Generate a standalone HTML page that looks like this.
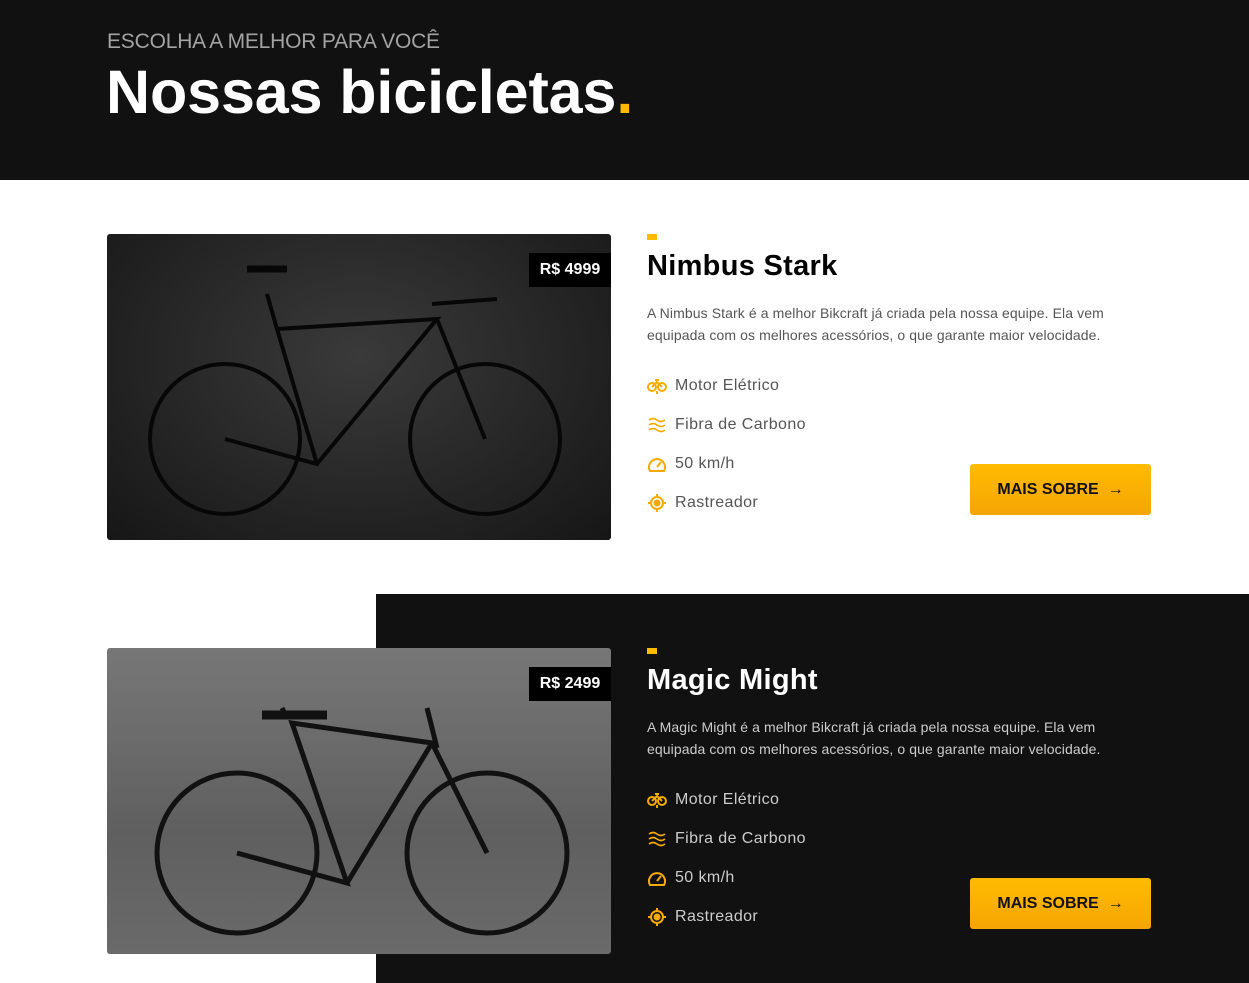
<!DOCTYPE html>
<html><head><meta charset="utf-8"><style>
*{margin:0;padding:0;box-sizing:border-box}
body{width:1249px;height:983px;overflow:hidden;background:#fff;font-family:"Liberation Sans",sans-serif;position:relative}
.hdr{position:absolute;left:0;top:0;width:1249px;height:180px;background:#111}
.sub{position:absolute;left:107px;top:30px;font-size:21px;color:#a3a3a3;letter-spacing:-0.2px}
.ttl{position:absolute;left:106px;top:57px;font-size:61px;font-weight:bold;color:#fff;letter-spacing:-0.1px}
.ttl span{color:#fb0}
.dark{position:absolute;left:376px;top:594px;width:873px;height:389px;background:#111}
.img{position:absolute;left:107px;width:504px;height:306px;border-radius:3px;overflow:hidden}
.badge{position:absolute;left:529px;width:82px;height:34px;background:#000;color:#fff;font-weight:bold;font-size:16px;line-height:34px;text-align:center}
.info{position:absolute;left:647px;width:500px}
.sq{width:10px;height:6px;background:#fb0}
.name{font-size:29px;font-weight:bold;margin-top:10px;letter-spacing:0.3px}
.p{font-size:14px;line-height:22px;color:#555;margin-top:19px;letter-spacing:0.1px}
.feat{font-size:16px;color:#555;height:39px;display:flex;align-items:center;letter-spacing:0.4px}
.feat svg{margin-right:8px}
.btn{position:absolute;left:970px;width:181px;height:51px;border-radius:3px;background:linear-gradient(#ffbb00,#f5a504);color:#111;font-weight:bold;font-size:16px;line-height:51px;text-align:center}
.dk .name{color:#fff}.dk .p,.dk .feat{color:#ccc}
</style></head><body>
<div class="hdr"><div class="sub">ESCOLHA A MELHOR PARA VOCÊ</div><div class="ttl">Nossas bicicletas<span>.</span></div></div>
<div class="dark"></div>

<div class="img" style="top:234px;background:radial-gradient(ellipse at 50% 40%,#3a3a3a,#161616)">
<svg width="504" height="306" fill="none" stroke="#070707" stroke-width="4"><circle cx="118" cy="205" r="75"/><circle cx="378" cy="205" r="75"/><path d="M118 205 L210 230 L330 85 L170 95 L210 230 M170 95 L160 60 M330 85 L378 205 M325 70 L390 65" /><path d="M140 35h40" stroke-width="7"/></svg></div>
<div class="badge" style="top:253px">R$ 4999</div>

<div class="img" style="top:648px;background:linear-gradient(#777,#5f5f5f 60%,#6a6a6a)">
<svg width="504" height="306" fill="none" stroke="#111" stroke-width="5"><circle cx="130" cy="205" r="80"/><circle cx="380" cy="205" r="80"/><path d="M130 205 L240 235 L185 75 L325 95 L240 235 M325 95 L380 205 M180 70 L175 60 M320 60 L330 100"/><path d="M155 67h65" stroke-width="9"/></svg></div>
<div class="badge" style="top:667px">R$ 2499</div>

<div class="info" style="top:234px">
<div class="sq"></div><div class="name">Nimbus Stark</div>
<div class="p">A Nimbus Stark é a melhor Bikcraft já criada pela nossa equipe. Ela vem equipada com os melhores acessórios, o que garante maior velocidade.</div>
<div style="margin-top:20px">
<div class="feat"><svg width="20" height="18" fill="none" stroke="#f5ab00" stroke-width="2"><circle cx="5" cy="10" r="4"/><circle cx="15" cy="10" r="4"/><path d="M5 10l5-5 5 5M8 3h4M10 14v3"/></svg>Motor Elétrico</div>
<div class="feat"><svg width="20" height="18" fill="none" stroke="#f5ab00" stroke-width="1.6"><path d="M2 4q4-3 8 0t8 0M2 9q4-3 8 0t8 0M2 14q4-3 8 0t8 0"/></svg>Fibra de Carbono</div>
<div class="feat"><svg width="20" height="18" fill="none" stroke="#f5ab00" stroke-width="2"><path d="M3 16a8 8 0 1 1 14 0zM10 12l4-5"/></svg>50 km/h</div>
<div class="feat"><svg width="20" height="20" fill="none" stroke="#f5ab00" stroke-width="2"><circle cx="10" cy="10" r="6"/><circle cx="10" cy="10" r="2.5" fill="#f5ab00"/><path d="M10 1v3M10 16v3M1 10h3M16 10h3"/></svg>Rastreador</div>
</div></div>
<div class="btn" style="top:464px">MAIS SOBRE &nbsp;→</div>

<div class="info dk" style="top:648px">
<div class="sq"></div><div class="name">Magic Might</div>
<div class="p">A Magic Might é a melhor Bikcraft já criada pela nossa equipe. Ela vem equipada com os melhores acessórios, o que garante maior velocidade.</div>
<div style="margin-top:20px">
<div class="feat"><svg width="20" height="18" fill="none" stroke="#f5ab00" stroke-width="2"><circle cx="5" cy="10" r="4"/><circle cx="15" cy="10" r="4"/><path d="M5 10l5-5 5 5M8 3h4M10 14v3"/></svg>Motor Elétrico</div>
<div class="feat"><svg width="20" height="18" fill="none" stroke="#f5ab00" stroke-width="1.6"><path d="M2 4q4-3 8 0t8 0M2 9q4-3 8 0t8 0M2 14q4-3 8 0t8 0"/></svg>Fibra de Carbono</div>
<div class="feat"><svg width="20" height="18" fill="none" stroke="#f5ab00" stroke-width="2"><path d="M3 16a8 8 0 1 1 14 0zM10 12l4-5"/></svg>50 km/h</div>
<div class="feat"><svg width="20" height="20" fill="none" stroke="#f5ab00" stroke-width="2"><circle cx="10" cy="10" r="6"/><circle cx="10" cy="10" r="2.5" fill="#f5ab00"/><path d="M10 1v3M10 16v3M1 10h3M16 10h3"/></svg>Rastreador</div>
</div></div>
<div class="btn" style="top:878px">MAIS SOBRE &nbsp;→</div>
</body></html>
